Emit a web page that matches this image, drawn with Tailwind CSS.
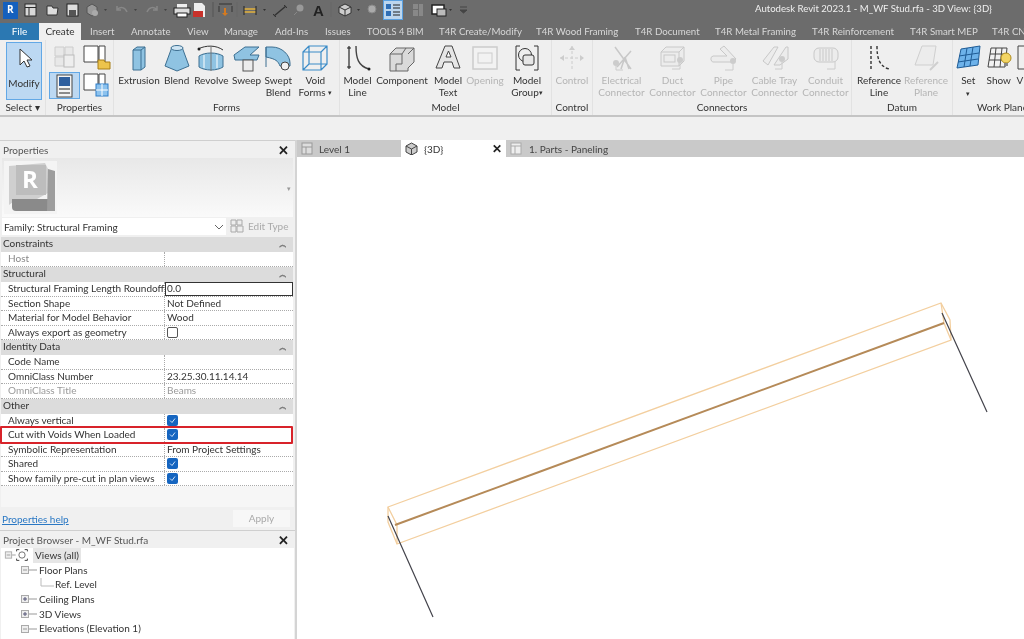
<!DOCTYPE html>
<html lang="en">
<head>
  <meta charset="UTF-8" />
  <title>Autodesk Revit 2023.1 - M_WF Stud.rfa - 3D View: {3D}</title>
  <script src="https://cdn.jsdelivr.net/npm/@tailwindcss/browser@4"></script>
</head>
<body class="bg-white">
<div class="w-[1024px] h-[639px] overflow-hidden flex flex-col blur-[0.35px] font-['Lato','Noto_Sans',sans-serif] text-[#333] text-[10px]">

  <!-- title bar / quick access -->
  <header class="relative h-[23px] shrink-0 bg-[#6c6c6c]">
    <svg class="absolute left-0 top-0" width="500" height="23" viewBox="0 0 500 23">
      <rect x="3" y="2" width="15" height="17" fill="#1560bd"/>
      <text x="7" y="13" font-size="10" font-weight="700" fill="#fff" font-family="Open Sans">R</text>
      <rect x="25" y="4" width="11" height="12" fill="#d8d8d8" stroke="#2a2a2a"/><path d="M25 7.500h11M29 7.500v8" stroke="#2a2a2a"/>
      <path d="M47 6h5l1 2h5l-1 7H47z" fill="#ddd" stroke="#333"/>
      <rect x="67" y="4" width="11" height="12" fill="#ddd" stroke="#222"/><rect x="69" y="10" width="7" height="6" fill="#555"/>
      <path d="M87 7l5-3 5 3v6l-5 3-5-3z" fill="#999" stroke="#555"/><circle cx="95" cy="13" r="3" fill="#aaa"/>
      <path d="M104 9l3 0-1.500 2z M134 9l3 0-1.500 2z M164 9l3 0-1.500 2z" fill="#444"/>
      <path d="M117 10c3-4 8-3 10 2M117 6v4h4" fill="none" stroke="#888" stroke-width="1.500"/>
      <path d="M157 10c-3-4-8-3-10 2M157 6v4h-4" fill="none" stroke="#888" stroke-width="1.500"/>
      <rect x="177" y="4" width="10" height="4" fill="#eee"/><rect x="174" y="8" width="16" height="6" fill="#ddd" stroke="#222"/><rect x="177" y="13" width="10" height="4" fill="#fff" stroke="#222"/>
      <path d="M194 3h8l3 3v11h-11z" fill="#eee"/><rect x="193" y="11" width="10" height="6" fill="#c8322b"/>
      <path d="M213 2v15" stroke="#555"/>
      <path d="M219 6v6M232 6v6M219 4h13" stroke="#333" fill="none"/><path d="M225 8v6" stroke="#d57a1f" stroke-width="2"/><path d="M222 13h6l-3 3z" fill="#d57a1f"/>
      <path d="M237 2v15" stroke="#666"/>
      <path d="M244 9h12M244 12h12" stroke="#e3b23c" stroke-width="1.500"/><path d="M244 6v9M256 6v9" stroke="#222"/>
      <path d="M263 9l3 0-1.500 2z" fill="#333"/>
      <path d="M274 16l12-10" stroke="#333" stroke-width="1.500"/><path d="M273 14l3 3M284 5l3 3" stroke="#333"/>
      <circle cx="300" cy="8" r="3.500" fill="#999"/><path d="M294 15l3-3" stroke="#888"/>
      <text x="313" y="16" font-size="15" font-weight="700" fill="#222" font-family="Liberation Sans">A</text>
      <path d="M331 2v15" stroke="#666"/>
      <path d="M339 7l6-3 6 3v6l-6 3-6-3z" fill="#ccc" stroke="#333"/><path d="M339 7l6 3 6-3M345 10v6" stroke="#333" fill="none"/>
      <path d="M357 9l3 0-1.500 2z" fill="#333"/>
      <path d="M368 9a4 4 0 1 0 8 0a4 4 0 1 0-8 0" fill="#aaa" stroke="#888"/>
      <rect x="383.500" y="0.500" width="19" height="19" fill="#bcd6ee" stroke="#5aa0e0"/>
      <path d="M386 4h5v5h-5zM386 11h5v5h-5z" fill="#2f6eb5"/><path d="M393 5h7M393 8h7M393 12h7M393 15h7" stroke="#222"/>
      <path d="M413 4h5v5h-5zM419 4h4v12h-4zM413 10h5v6h-5z" fill="#888"/>
      <rect x="432" y="5" width="12" height="9" fill="#fff" stroke="#222" stroke-width="1.500"/><rect x="437" y="9" width="9" height="7" fill="#bbb" stroke="#222"/>
      <path d="M449 9l3 0-1.500 2z" fill="#333"/>
      <path d="M460 7h7M460 10l3.500 3 3.500-3z" fill="#444" stroke="#444"/>
    </svg>
    <div class="absolute left-[755px] top-[1px] leading-[16px] text-[#efefef] text-[9.600px] whitespace-nowrap">Autodesk Revit 2023.1 - M_WF Stud.rfa - 3D View: {3D}</div>
  </header>

  <!-- ribbon tabs -->
  <nav class="h-[17px] shrink-0 bg-[#6c6c6c] flex text-[#d8d8d8] leading-[17px] whitespace-nowrap overflow-hidden">
    <div class="w-[39px] shrink-0 bg-[#2b78b2] text-white text-center">File</div>
    <div class="w-[42px] shrink-0 bg-[#f0f0f0] text-[#333] text-center">Create</div>
    <div class="flex shrink-0 pl-[9px] text-[9.700px]">
      <span class="w-[41px]">Insert</span>
      <span class="w-[56px]">Annotate</span>
      <span class="w-[37px]">View</span>
      <span class="w-[51px]">Manage</span>
      <span class="w-[50px]">Add-Ins</span>
      <span class="w-[42px]">Issues</span>
      <span class="w-[72px] text-[9.200px]">TOOLS 4 BIM</span>
      <span class="w-[97px]">T4R Create/Modify</span>
      <span class="w-[99px]">T4R Wood Framing</span>
      <span class="w-[80px]">T4R Document</span>
      <span class="w-[97px]">T4R Metal Framing</span>
      <span class="w-[98px]">T4R Reinforcement</span>
      <span class="w-[82px]">T4R Smart MEP</span>
      <span>T4R CNC</span>
    </div>
  </nav>

  <!-- ribbon -->
  <section class="h-[77px] shrink-0 bg-[#efefef] border-b-2 border-[#c4c4c4] flex whitespace-nowrap text-center leading-[12px]">
    <div class="w-[46px] shrink-0 flex flex-col border-r border-[#e2e2e2]">
      <div class="h-[62px] pl-[6px] pt-[2px]">
        <div class="w-[36px] h-[58px] bg-[#bcd8f2] border border-[#62a8e6] flex flex-col items-center">
          <svg width="22" height="30" viewBox="0 0 22 30"><path d="M7 6v16l4-4 3 6 3-1-3-6h5z" fill="#fff" stroke="#333"/></svg>
          <span class="mt-[4px]">Modify</span>
        </div>
      </div>
      <div class="flex-1 leading-[15px]">Select ▾</div>
    </div>

    <div class="w-[68px] shrink-0 flex flex-col border-r border-[#e2e2e2]">
      <div class="h-[62px] pl-[3px] pt-[4px] grid grid-cols-[31px_31px] grid-rows-[27px_27px] gap-x-[2px] gap-y-[1px]">
        <svg width="30" height="26" viewBox="0 0 30 26"><path d="M6 3h9v9H6zM16 3h8v9h-8zM6 13h9v9H6z" fill="#e8e8e8" stroke="#ccc"/><rect x="15" y="11" width="10" height="12" fill="#eee" stroke="#bbb"/></svg>
        <svg width="30" height="26" viewBox="0 0 30 26"><path d="M2 2h14v16H2zM17 2h6v16h-6z" fill="#fff" stroke="#444"/><path d="M16 16h6l1 2h5v7H16z" fill="#edc44c" stroke="#a87e17"/></svg>
        <div class="bg-[#bcd8f2] border border-[#62a8e6] flex items-center justify-center">
          <svg width="22" height="24" viewBox="0 0 22 24"><rect x="3" y="1" width="15" height="22" fill="#f4f4f4" stroke="#444"/><rect x="5" y="3" width="11" height="9" fill="#2f5f9e"/><path d="M5 15h11M5 19h11" stroke="#222"/></svg>
        </div>
        <svg width="30" height="26" viewBox="0 0 30 26"><path d="M2 2h14v16H2zM17 2h6v16h-6z" fill="#fff" stroke="#444"/><rect x="14" y="12" width="12" height="12" fill="#8cc2ee" stroke="#2f7fc9"/><path d="M20 12v12M14 18h12" stroke="#fff"/></svg>
      </div>
      <div class="flex-1 leading-[15px]">Properties</div>
    </div>

    <div class="w-[226px] shrink-0 flex flex-col border-r border-[#e2e2e2]">
      <div class="h-[62px] flex pl-[5px]">
        <div class="w-[40px] pt-[3px] flex flex-col items-center"><svg width="26" height="30" viewBox="0 0 26 30"><path d="M7 7l4-3h8v20l-4 3H7z" fill="#8fc3e2" stroke="#3d6f91"/><path d="M7 7h8l4-3M15 7v20" fill="none" stroke="#3d6f91"/></svg><span class="mt-[1px]">Extrusion</span></div>
        <div class="w-[36px] pt-[3px] flex flex-col items-center"><svg width="28" height="30" viewBox="0 0 28 30"><path d="M9 4h10l7 19-12 5-12-5z" fill="#8fc3e2" stroke="#3d6f91"/><ellipse cx="14" cy="5" rx="6" ry="2.500" fill="#cfe5f3" stroke="#3d6f91"/></svg><span class="mt-[1px]">Blend</span></div>
        <div class="w-[34px] pt-[3px] flex flex-col items-center"><svg width="30" height="30" viewBox="0 0 30 30"><path d="M2 6c8-4 18-4 25 1" fill="none" stroke="#333"/><circle cx="3" cy="6" r="1.500" fill="#222"/><path d="M3 13c6-4 18-4 24 0v11c-6 4-18 4-24 0z" fill="#8fc3e2" stroke="#3d6f91"/><path d="M15 3v25" stroke="#777"/><path d="M8 12v13M21 12v13" stroke="#fff"/></svg><span class="mt-[1px]">Revolve</span></div>
        <div class="w-[37px] pt-[3px] flex flex-col items-center"><svg width="30" height="30" viewBox="0 0 30 30"><path d="M2 12l11-8h14l-9 8h9l-2 5H3z" fill="#8fc3e2" stroke="#3d6f91"/><rect x="11" y="17" width="10" height="11" fill="#ececec" stroke="#555"/></svg><span class="mt-[1px]">Sweep</span></div>
        <div class="w-[27px] pt-[3px] flex flex-col items-center"><svg width="28" height="30" viewBox="0 0 28 30"><path d="M2 4h6c10 0 18 8 18 16v3H16C14 18 12 16 2 14z" fill="#8fc3e2" stroke="#3d6f91"/><path d="M2 4v20" stroke="#3d6f91"/><circle cx="21" cy="23" r="4" fill="#f1f1f1" stroke="#444"/></svg><span class="mt-[1px] leading-[12px]">Swept<br>Blend</span></div>
        <div class="w-[48px] pt-[3px] flex flex-col items-center"><svg width="28" height="30" viewBox="0 0 28 30"><path d="M2 9h18v18H2zM8 3h18v18H8zM2 9l6-6M20 9l6-6M2 27l6-6M20 27l6-6" fill="none" stroke="#3a8bc7" stroke-width="1.200"/></svg><span class="mt-[1px] leading-[12px]">Void<br>Forms <span class="text-[7px] align-top">▾</span></span></div>
      </div>
      <div class="flex-1 leading-[15px]">Forms</div>
    </div>

    <div class="w-[212px] shrink-0 flex flex-col border-r border-[#e2e2e2]">
      <div class="h-[62px] flex pl-[1px]">
        <div class="w-[33px] pt-[3px] flex flex-col items-center"><svg width="28" height="30" viewBox="0 0 28 30"><path d="M5 3v23M12 3c0 12 2 20 13 23" fill="none" stroke="#444" stroke-width="1.400"/><path d="M3 5h4M3 24h4" stroke="#222"/><circle cx="25" cy="26" r="1.500" fill="#222"/></svg><span class="mt-[1px] leading-[12px]">Model<br>Line</span></div>
        <div class="w-[56px] pt-[3px] flex flex-col items-center"><svg width="28" height="30" viewBox="0 0 28 30"><path d="M2 11l6-6h18v14l-6 6v3H2z" fill="#dadada" stroke="#666"/><path d="M2 11h12l4-6M14 11v10H8v7" fill="none" stroke="#666"/><path d="M20 11l6-6" stroke="#666"/></svg><span class="mt-[1px]">Component</span></div>
        <div class="w-[36px] pt-[3px] flex flex-col items-center"><svg width="28" height="30" viewBox="0 0 28 30"><path d="M11 3h7l8 22h-6l-2-6H10l-2 6H2z" fill="#e6e6e6" stroke="#444"/><path d="M12 14h5l-2.500-6z" fill="#fff" stroke="#444"/></svg><span class="mt-[1px] leading-[12px]">Model<br>Text</span></div>
        <div class="w-[38px] pt-[3px] flex flex-col items-center text-[#b5b5b5]"><svg width="28" height="30" viewBox="0 0 28 30"><rect x="2" y="4" width="24" height="22" fill="#f2f2f2" stroke="#ccc" stroke-width="1.500"/><rect x="7" y="10" width="14" height="10" fill="none" stroke="#ccc"/></svg><span class="mt-[1px]">Opening</span></div>
        <div class="w-[46px] pt-[3px] flex flex-col items-center"><svg width="28" height="30" viewBox="0 0 28 30"><path d="M7 3H3v24h4M21 3h4v24h-4" fill="none" stroke="#333"/><circle cx="12" cy="12" r="6.500" fill="#eee" stroke="#333"/><rect x="10" y="12" width="11" height="10" rx="2" fill="#e6e6e6" stroke="#333"/></svg><span class="mt-[1px] leading-[12px]">Model<br>Group<span class="text-[7px] align-top">▾</span></span></div>
      </div>
      <div class="flex-1 leading-[15px]">Model</div>
    </div>

    <div class="w-[41px] shrink-0 flex flex-col border-r border-[#e2e2e2]">
      <div class="h-[62px] pt-[3px] flex flex-col items-center text-[#b5b5b5]"><svg width="28" height="30" viewBox="0 0 28 30"><path d="M14 3v24M2 15h24" stroke="#ccc" stroke-dasharray="3 2"/><path d="M2 15l4-3v6zM26 15l-4-3v6zM14 3l-3 4h6z" fill="#ccc"/></svg><span class="mt-[1px]">Control</span></div>
      <div class="flex-1 leading-[15px]">Control</div>
    </div>

    <div class="w-[259px] shrink-0 flex flex-col border-r border-[#e2e2e2]">
      <div class="h-[62px] flex pl-[3px] text-[#b5b5b5]">
        <div class="w-[51px] pt-[3px] flex flex-col items-center"><svg width="30" height="30" viewBox="0 0 30 30"><path d="M8 4l16 22M24 8L10 24M18 14l4 12M18 14l-4 12" stroke="#c8c8c8" stroke-width="1.500"/><circle cx="9" cy="20" r="3" fill="#ccc"/><path d="M9 23v4h7" fill="none" stroke="#ccc"/></svg><span class="mt-[1px] leading-[12px]">Electrical<br>Connector</span></div>
        <div class="w-[51px] pt-[3px] flex flex-col items-center"><svg width="30" height="30" viewBox="0 0 30 30"><path d="M3 9l5-5h18v14l-5 5H3z" fill="#ececec" stroke="#c8c8c8"/><path d="M3 9h18v14M21 9l5-5" fill="none" stroke="#c8c8c8"/><rect x="6" y="12" width="11" height="7" fill="none" stroke="#c8c8c8"/><circle cx="22" cy="17" r="3" fill="#ccc"/><path d="M22 20v6h-8" fill="none" stroke="#ccc"/></svg><span class="mt-[1px] leading-[12px]">Duct<br>Connector</span></div>
        <div class="w-[51px] pt-[3px] flex flex-col items-center"><svg width="30" height="30" viewBox="0 0 30 30"><path d="M4 13h14l-7-7 4-3 12 13-3 3H6a3 3 0 0 1-2-6z" fill="#ececec" stroke="#c8c8c8"/><circle cx="24" cy="18" r="3" fill="#ccc"/><path d="M24 21v6h-8" fill="none" stroke="#ccc"/></svg><span class="mt-[1px] leading-[12px]">Pipe<br>Connector</span></div>
        <div class="w-[51px] pt-[3px] flex flex-col items-center"><svg width="30" height="30" viewBox="0 0 30 30"><path d="M3 18L14 4h4L8 22zM14 22L26 4h2v12l-8 6z" fill="#ececec" stroke="#c8c8c8"/><circle cx="22" cy="16" r="3" fill="#ccc"/><path d="M22 19v7h-7" fill="none" stroke="#ccc"/></svg><span class="mt-[1px] leading-[12px]">Cable Tray<br>Connector</span></div>
        <div class="w-[51px] pt-[3px] flex flex-col items-center"><svg width="30" height="30" viewBox="0 0 30 30"><rect x="3" y="5" width="24" height="14" rx="5" fill="#ececec" stroke="#c8c8c8"/><path d="M9 6v12M12 6v12M15 6v12M18 6v12M21 6v12" stroke="#c8c8c8"/><path d="M24 19v7h-8" fill="none" stroke="#ccc"/></svg><span class="mt-[1px] leading-[12px]">Conduit<br>Connector</span></div>
      </div>
      <div class="flex-1 leading-[15px]">Connectors</div>
    </div>

    <div class="w-[101px] shrink-0 flex flex-col border-r border-[#e2e2e2]">
      <div class="h-[62px] flex pl-[3px]">
        <div class="w-[48px] pt-[3px] flex flex-col items-center"><svg width="28" height="30" viewBox="0 0 28 30"><path d="M6 3v23M12 3c0 12 2 20 12 23" fill="none" stroke="#333" stroke-width="1.400" stroke-dasharray="3 2"/></svg><span class="mt-[1px] leading-[12px]">Reference<br>Line</span></div>
        <div class="w-[46px] pt-[3px] flex flex-col items-center text-[#b5b5b5]"><svg width="28" height="30" viewBox="0 0 28 30"><path d="M10 3h14l-3 19H3z" fill="#ececec" stroke="#cfcfcf"/><path d="M18 27l8-8" stroke="#cfcfcf" stroke-width="2"/></svg><span class="mt-[1px] leading-[12px]">Reference<br>Plane</span></div>
      </div>
      <div class="flex-1 leading-[15px]">Datum</div>
    </div>

    <div class="flex-1 min-w-0 flex flex-col">
      <div class="h-[62px] flex">
        <div class="w-[32px] pt-[3px] flex flex-col items-center"><svg width="26" height="30" viewBox="0 0 26 30"><path d="M6 6l19-3-2 19-21 3z" fill="#6db2ea" stroke="#1f5c96"/><path d="M4 13l20-3M3 19l20-3M12 5l-3 19M18 4l-3 19" stroke="#1f5c96"/></svg><span class="mt-[1px] leading-[12px]">Set<br><span class="text-[7px]">▾</span></span></div>
        <div class="w-[32px] pt-[3px] flex flex-col items-center"><svg width="26" height="30" viewBox="0 0 26 30"><path d="M5 5h16l-2 19H2z" fill="#f2f2f2" stroke="#444"/><path d="M4 11h16M3 17h16M10 5l-2 19M16 5l-2 19" stroke="#444"/><circle cx="20" cy="15" r="5" fill="#f3d564" stroke="#b08d1e"/><rect x="18" y="20" width="4" height="3" fill="#888"/></svg><span class="mt-[1px]">Show</span></div>
        <div class="pt-[3px] pl-[2px] flex flex-col"><svg width="8" height="30" viewBox="0 0 8 30"><path d="M2 3h6M2 3v23h6" fill="none" stroke="#444"/></svg><span class="mt-[1px]">V</span></div>
      </div>
      <div class="flex-1 leading-[15px] pl-[24px] text-left">Work Plane</div>
    </div>
  </section>

  <!-- options bar -->
  <div class="h-[23px] shrink-0 bg-[#f0f0f0]"></div>

  <div class="flex-1 flex min-h-0 bg-[#d4d4d4]">
    <!-- left dock -->
    <aside class="w-[295px] shrink-0 flex flex-col bg-[#f0f0f0] border-t border-[#cfcfcf] leading-[14px] relative">
      <div class="h-[17px] flex justify-between items-center pl-[3px] pr-[6px] text-[#555]"><span>Properties</span><span class="text-[13px] font-bold text-[#222]">✕</span></div>
      <div class="h-[59px] mx-[2px] bg-gradient-to-b from-[#e8e8e8] to-[#fafafa] flex items-center justify-between pr-[2px]">
        <svg width="55" height="53" viewBox="0 0 55 53" class="ml-[2px]"><rect x="0" y="0" width="53" height="53" fill="#f4f4f4"/><path d="M5 5l36-3 3 6v24l-11 6H13L5 44z" fill="#cfcfcf"/><path d="M12 4h30v30H12z" fill="#bdbdbd"/><path d="M8 38h42v12H12a4 4 0 0 1-4-4z" fill="#8a8a8a"/><path d="M44 8l7 2v40h-8z" fill="#9d9d9d"/><text x="18" y="27" font-size="24" font-weight="700" fill="#fff" font-family="Open Sans">R</text></svg>
        <span class="text-[7px] text-[#999]">▾</span>
      </div>
      <div class="h-[19px] mt-[1px] flex items-start gap-[4px]">
        <div class="ml-[2px] w-[224px] h-[17px] bg-white flex justify-between items-center pl-[2px] pr-[2px]">
          <span>Family: Structural Framing</span>
          <svg width="10" height="6" viewBox="0 0 10 6"><path d="M1 1l4 4 4-4" fill="none" stroke="#666"/></svg>
        </div>
        <svg width="14" height="14" viewBox="0 0 14 14" class="mt-[1px]"><path d="M1 1h5v5H1zM7 1h5v5H7zM1 7h5v6H1zM7 7h6v6H7z" fill="#eee" stroke="#aaa"/></svg>
        <span class="text-[#aaa] mt-[1px]">Edit Type</span>
      </div>

      <!-- property grid -->
      <div class="mx-[1px] w-[292px] leading-[12px]">
        <div class="h-[15px] bg-[#dcdcdc] flex justify-between items-start px-[2px] pr-[6px]"><span>Constraints</span><span class="text-[8px] leading-[14px]">︽</span></div>
        <div class="h-[15px] flex bg-white border-b border-dotted border-[#aaa]"><div class="w-[164px] pl-[7px] text-[#888] border-r border-dotted border-[#aaa]">Host</div><div class="flex-1"></div></div>
        <div class="h-[15px] bg-[#dcdcdc] flex justify-between items-start px-[2px] pr-[6px]"><span>Structural</span><span class="text-[8px] leading-[14px]">︽</span></div>
        <div class="h-[14.500px] flex bg-white border-b border-dotted border-[#aaa]"><div class="w-[164px] pl-[7px] border-r border-dotted border-[#aaa] whitespace-nowrap overflow-hidden">Structural Framing Length Roundoff</div><div class="flex-1 pl-[1px] border border-[#333] leading-[11px]">0.0</div></div>
        <div class="h-[14.500px] flex bg-white border-b border-dotted border-[#aaa]"><div class="w-[164px] pl-[7px] border-r border-dotted border-[#aaa]">Section Shape</div><div class="flex-1 pl-[2px]">Not Defined</div></div>
        <div class="h-[14.500px] flex bg-white border-b border-dotted border-[#aaa]"><div class="w-[164px] pl-[7px] border-r border-dotted border-[#aaa]">Material for Model Behavior</div><div class="flex-1 pl-[2px]">Wood</div></div>
        <div class="h-[14.500px] flex bg-white border-b border-dotted border-[#aaa]"><div class="w-[164px] pl-[7px] border-r border-dotted border-[#aaa]">Always export as geometry</div><div class="flex-1 pl-[2px] flex items-center"><div class="w-[11px] h-[11px] rounded-[2px] border border-[#555] bg-white"></div></div></div>
        <div class="h-[15px] bg-[#dcdcdc] flex justify-between items-start px-[2px] pr-[6px]"><span>Identity Data</span><span class="text-[8px] leading-[14px]">︽</span></div>
        <div class="h-[14.500px] flex bg-white border-b border-dotted border-[#aaa]"><div class="w-[164px] pl-[7px] border-r border-dotted border-[#aaa]">Code Name</div><div class="flex-1"></div></div>
        <div class="h-[14.500px] flex bg-white border-b border-dotted border-[#aaa]"><div class="w-[164px] pl-[7px] border-r border-dotted border-[#aaa]">OmniClass Number</div><div class="flex-1 pl-[2px]">23.25.30.11.14.14</div></div>
        <div class="h-[14.500px] flex bg-white border-b border-dotted border-[#aaa] text-[#999]"><div class="w-[164px] pl-[7px] border-r border-dotted border-[#aaa]">OmniClass Title</div><div class="flex-1 pl-[2px]">Beams</div></div>
        <div class="h-[15px] bg-[#dcdcdc] flex justify-between items-start px-[2px] pr-[6px]"><span>Other</span><span class="text-[8px] leading-[14px]">︽</span></div>
        <div class="h-[14.500px] flex bg-white border-b border-dotted border-[#aaa]"><div class="w-[164px] pl-[7px] border-r border-dotted border-[#aaa]">Always vertical</div><div class="flex-1 pl-[2px] flex items-center"><svg width="11" height="11" viewBox="0 0 11 11"><rect width="11" height="11" rx="2" fill="#1565c0"/><path d="M3 5.500l2 2 3-4" fill="none" stroke="#cfe2f7"/></svg></div></div>
        <div class="h-[14.500px] flex bg-white border-b border-dotted border-[#aaa]"><div class="w-[164px] pl-[7px] border-r border-dotted border-[#aaa]">Cut with Voids When Loaded</div><div class="flex-1 pl-[2px] flex items-center"><svg width="11" height="11" viewBox="0 0 11 11"><rect width="11" height="11" rx="2" fill="#1565c0"/><path d="M3 5.500l2 2 3-4" fill="none" stroke="#cfe2f7"/></svg></div></div>
        <div class="h-[14.500px] flex bg-white border-b border-dotted border-[#aaa]"><div class="w-[164px] pl-[7px] border-r border-dotted border-[#aaa]">Symbolic Representation</div><div class="flex-1 pl-[2px]">From Project Settings</div></div>
        <div class="h-[14.500px] flex bg-white border-b border-dotted border-[#aaa]"><div class="w-[164px] pl-[7px] border-r border-dotted border-[#aaa]">Shared</div><div class="flex-1 pl-[2px] flex items-center"><svg width="11" height="11" viewBox="0 0 11 11"><rect width="11" height="11" rx="2" fill="#1565c0"/><path d="M3 5.500l2 2 3-4" fill="none" stroke="#cfe2f7"/></svg></div></div>
        <div class="h-[14.500px] flex bg-white border-b border-dotted border-[#aaa]"><div class="w-[164px] pl-[7px] border-r border-dotted border-[#aaa]">Show family pre-cut in plan views</div><div class="flex-1 pl-[2px] flex items-center"><svg width="11" height="11" viewBox="0 0 11 11"><rect width="11" height="11" rx="2" fill="#1565c0"/><path d="M3 5.500l2 2 3-4" fill="none" stroke="#cfe2f7"/></svg></div></div>
      </div>
      <div class="h-[21px] bg-[#f6f6f6] mx-[1px]"></div>
      <div class="h-[23px] flex justify-between items-center pl-[2px] pr-[5px]">
        <span class="text-[#2a78c4] underline">Properties help</span>
        <span class="w-[57px] h-[17px] bg-[#f7f7f7] text-[#aaa] text-center leading-[17px]">Apply</span>
      </div>
      <div class="h-[1px] bg-[#cfcfcf]"></div>
      <div class="h-[17px] flex justify-between items-center pl-[3px] pr-[6px] text-[#555]"><span>Project Browser - M_WF Stud.rfa</span><span class="text-[13px] font-bold text-[#222]">✕</span></div>
      <div class="flex-1 bg-white mx-[1px] leading-[14.700px] overflow-hidden">
        <div class="flex items-center h-[14.700px] pl-[3px]">
          <svg width="27" height="14" viewBox="0 0 30 14"><rect x="1.500" y="3.500" width="7" height="7" fill="#eee" stroke="#aaa"/><path d="M3 7h4M9 7h4" stroke="#999"/><path d="M14 3V1h3M23 1h3v2M14 11v2h3M23 13h3v-2" fill="none" stroke="#333"/><circle cx="20" cy="7" r="3.500" fill="none" stroke="#666"/></svg>
          <span class="bg-[#e6e6e6] px-[2px] ml-[2px]">Views (all)</span>
        </div>
        <div class="flex items-center h-[14.700px] pl-[19px]"><svg width="18" height="14" viewBox="0 0 18 14"><rect x="1.500" y="3.500" width="7" height="7" fill="#eee" stroke="#aaa"/><path d="M3 7h4M9 7h8" stroke="#999"/></svg><span class="ml-[1px]">Floor Plans</span></div>
        <div class="flex items-center h-[14.700px] pl-[39px]"><svg width="14" height="14" viewBox="0 0 14 14"><path d="M1 0v8h13" fill="none" stroke="#bbb"/></svg><span class="ml-[1px]">Ref. Level</span></div>
        <div class="flex items-center h-[14.700px] pl-[19px]"><svg width="18" height="14" viewBox="0 0 18 14"><rect x="1.500" y="3.500" width="7" height="7" fill="#eee" stroke="#aaa"/><path d="M3 7h4M5 5v4" stroke="#557"/><path d="M9 7h8" stroke="#999"/></svg><span class="ml-[1px]">Ceiling Plans</span></div>
        <div class="flex items-center h-[14.700px] pl-[19px]"><svg width="18" height="14" viewBox="0 0 18 14"><rect x="1.500" y="3.500" width="7" height="7" fill="#eee" stroke="#aaa"/><path d="M3 7h4M5 5v4" stroke="#557"/><path d="M9 7h8" stroke="#999"/></svg><span class="ml-[1px]">3D Views</span></div>
        <div class="flex items-center h-[14.700px] pl-[19px]"><svg width="18" height="14" viewBox="0 0 18 14"><rect x="1.500" y="3.500" width="7" height="7" fill="#eee" stroke="#aaa"/><path d="M3 7h4M9 7h8" stroke="#999"/></svg><span class="ml-[1px]">Elevations (Elevation 1)</span></div>
      </div>

      <!-- red highlight around the checkbox row -->
      <div class="absolute left-0 top-[285px] w-[293px] h-[18px] border-2 border-[#d8232a] rounded-[1px] pointer-events-none"></div>
    </aside>

    <!-- view area -->
    <main class="flex-1 ml-[2px] flex flex-col min-w-0 bg-white">
      <div class="h-[17px] shrink-0 flex bg-[#c9c9c9] leading-[17px] text-[#444] whitespace-nowrap">
        <div class="w-[104px] flex items-center gap-[6px] pl-[4px]">
          <svg width="12" height="13" viewBox="0 0 12 13"><rect x="1" y="1" width="10" height="11" fill="#ddd" stroke="#999"/><path d="M1 5h10M5 5v7" stroke="#999"/></svg><span class="pt-[1px]">Level 1</span>
        </div>
        <div class="w-[105px] bg-white flex items-center pl-[4px] text-[#333]">
          <svg width="13" height="13" viewBox="0 0 13 13"><path d="M1 4l5.500-3L12 4v6l-5.500 3L1 10z" fill="#ccc" stroke="#444"/><path d="M1 4l5.500 3L12 4M6.500 7v6" fill="none" stroke="#444"/></svg>
          <span class="ml-[6px] pt-[1px]">{3D}</span><span class="ml-auto mr-[4px] text-[12px] font-bold text-[#222]">✕</span>
        </div>
        <div class="flex items-center gap-[7px] pl-[4px]">
          <svg width="12" height="13" viewBox="0 0 12 13"><rect x="1" y="1" width="10" height="11" fill="#eee" stroke="#aaa"/><path d="M1 4h10M5 4v8" stroke="#aaa"/></svg><span class="pt-[1px]">1. Parts - Paneling</span>
        </div>
      </div>
      <div class="flex-1 min-h-0">
        <svg width="727" height="482" viewBox="297 157 727 482" fill="none">
          <g stroke="#f3cf9f" stroke-width="1.300">
            <path d="M388 507L941 303L950 320L951 340L397 544L388 522Z"/>
            <path d="M388 507L397 525L397 544M941 303L944 323L951 340"/>
          </g>
          <path d="M395 525L944 323" stroke="#b58a58" stroke-width="2"/>
          <path d="M388 516L433 617M942 313L987 412" stroke="#44444c" stroke-width="1.200"/>
        </svg>
      </div>
    </main>
  </div>
</div>
</body>
</html>
